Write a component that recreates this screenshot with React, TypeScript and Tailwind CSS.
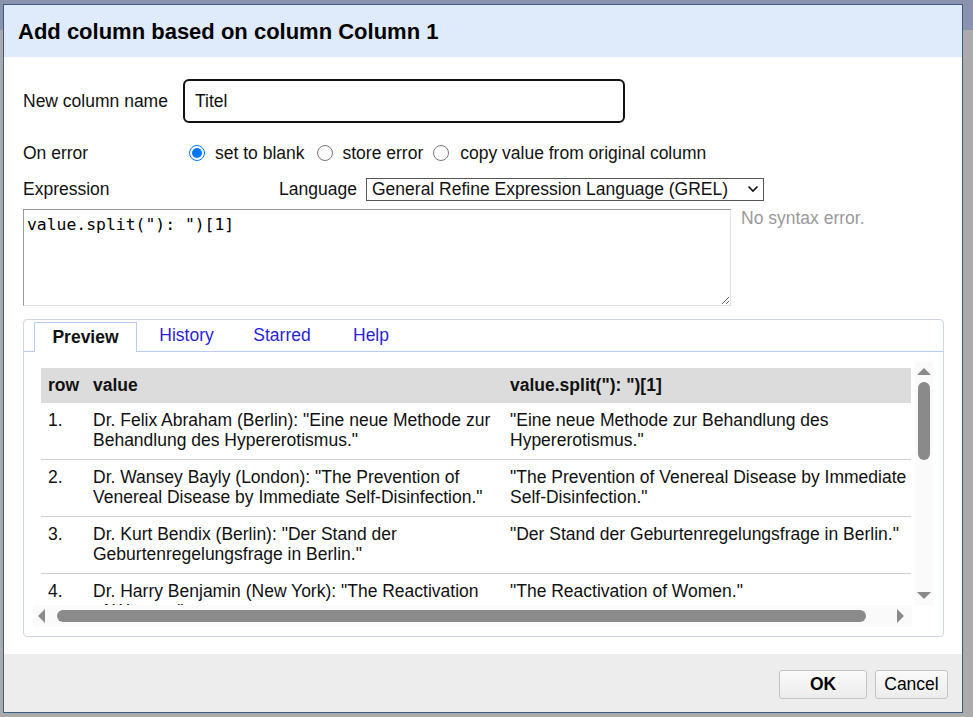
import React from "react";

const rows = [
  {
    n: "1.",
    value: 'Dr. Felix Abraham (Berlin): "Eine neue Methode zur Behandlung des Hypererotismus."',
    result: '"Eine neue Methode zur Behandlung des Hypererotismus."',
  },
  {
    n: "2.",
    value: 'Dr. Wansey Bayly (London): "The Prevention of Venereal Disease by Immediate Self-Disinfection."',
    result: '"The Prevention of Venereal Disease by Immediate Self-Disinfection."',
  },
  {
    n: "3.",
    value: 'Dr. Kurt Bendix (Berlin): "Der Stand der Geburtenregelungsfrage in Berlin."',
    result: '"Der Stand der Geburtenregelungsfrage in Berlin."',
  },
  {
    n: "4.",
    value: 'Dr. Harry Benjamin (New York): "The Reactivation of Women."',
    result: '"The Reactivation of Women."',
  },
];

function Radio({ checked }: { checked?: boolean }) {
  return (
    <span
      className={
        "inline-flex h-[16px] w-[16px] shrink-0 items-center justify-center rounded-full border " +
        (checked ? "border-[#0075ff] bg-white" : "border-[#767676] bg-white")
      }
    >
      {checked && <span className="h-[10px] w-[10px] rounded-full bg-[#0075ff]" />}
    </span>
  );
}

export default function App() {
  return (
    <div
      className="relative h-[717px] w-[973px] overflow-hidden bg-[#ababab] text-[17.5px] text-[#111]"
      style={{ fontFamily: '"Liberation Sans", Arial, sans-serif' }}
    >
      <div className="h-[30px] bg-[#8a92ae]" />
      <div className="absolute left-[3px] top-[4px] flex h-[709px] w-[960px] flex-col border border-[#3d5a80] bg-white">
        {/* header */}
        <div className="flex h-[52px] shrink-0 items-center bg-[#dfeafb] pl-[14px]">
          <h1 className="text-[22px] font-bold text-black">Add column based on column Column 1</h1>
        </div>

        {/* body */}
        <div className="flex flex-1 flex-col pl-[19px] pr-[19px] pt-[22px]">
          <div className="flex items-center">
            <span className="w-[160px]">New column name</span>
            <div className="flex h-[44px] w-[442px] items-center rounded-[6px] border-2 border-[#111] px-[10px]">
              Titel
            </div>
          </div>

          <div className="mt-[17px] flex items-center">
            <span className="w-[166px]">On error</span>
            <Radio checked />
            <span className="ml-[10px] mr-[12px]">set to blank</span>
            <Radio />
            <span className="ml-[10px] mr-[10px]">store error</span>
            <Radio />
            <span className="ml-[11px]">copy value from original column</span>
          </div>

          <div className="mt-[10px] flex items-center">
            <span className="w-[256px]">Expression</span>
            <span className="w-[87px]">Language</span>
            <div className="flex h-[23px] w-[398px] items-center justify-between border border-[#555] pl-[5px] pr-[4px]">
              <span>General Refine Expression Language (GREL)</span>
              <svg width="12" height="8" viewBox="0 0 12 8" fill="none" stroke="#111" strokeWidth="1.6">
                <path d="M1.5 1.5 L6 6 L10.5 1.5" />
              </svg>
            </div>
          </div>

          <div className="mt-[6px] flex items-start">
            <textarea
              readOnly
              value={'value.split("): ")[1]'}
              className="h-[97px] w-[708px] resize border border-b-[#e2e2e2] border-l-[#9a9a9a] border-r-[#e2e2e2] border-t-[#9a9a9a] px-[3px] pt-[5px] text-[16.4px] leading-[20px] text-black outline-none"
              style={{ fontFamily: '"DejaVu Sans Mono", "Liberation Mono", monospace' }}
            />
            <span className="ml-[10px] mt-[-4px] text-[#999]">No syntax error.</span>
          </div>

          {/* tabs panel */}
          <div className="mt-[13px] flex h-[318px] w-[921px] flex-col rounded-[4px] border border-[#cfd6e2] bg-white">
            <div className="flex h-[31px] items-end pl-[10px]">
              <div className="relative z-10 -mb-px flex h-[30px] w-[103px] items-center justify-center border border-b-0 border-[#b9cbf2] bg-white font-bold">
                Preview
              </div>
              <div className="flex h-[30px] w-[99px] items-center justify-center text-[#2a1fd6]">History</div>
              <div className="flex h-[30px] w-[92px] items-center justify-center text-[#2a1fd6]">Starred</div>
              <div className="flex h-[30px] w-[86px] items-center justify-center text-[#2a1fd6]">Help</div>
            </div>
            <div className="flex flex-1 flex-col border-t border-[#b9cbf2] pb-[8px] pl-[9px] pr-[10px] pt-[10px]">
              <div className="flex h-[243px]">
                <div className="flex-1 overflow-hidden pl-[8px] pt-[6px]">
                  <table className="w-[870px] table-fixed border-collapse text-left">
                    <colgroup>
                      <col className="w-[45px]" />
                      <col className="w-[417px]" />
                      <col />
                    </colgroup>
                    <thead>
                      <tr className="h-[35px] bg-[#dcdcdc] font-bold">
                        <th className="pl-[7px] font-bold">row</th>
                        <th className="pl-[7px] font-bold">value</th>
                        <th className="pl-[7px] font-bold">value.split("): ")[1]</th>
                      </tr>
                    </thead>
                    <tbody>
                      {rows.map((r) => (
                        <tr key={r.n} className="border-b border-[#cfcfcf] align-top leading-[20px]">
                          <td className="h-[57px] pl-[7px] pt-[7px]">{r.n}</td>
                          <td className="pl-[7px] pr-[6px] pt-[7px]">{r.value}</td>
                          <td className="pl-[7px] pt-[7px]">{r.result}</td>
                        </tr>
                      ))}
                    </tbody>
                  </table>
                </div>
                {/* vertical scrollbar */}
                <div className="flex w-[18px] flex-col items-center bg-[#fafafa] pt-[5px]">
                  <svg width="16" height="9" viewBox="0 0 16 9">
                    <path d="M8 1 L15 8 L1 8 Z" fill="#8a8a8a" />
                  </svg>
                  <div className="mt-[6px] h-[78px] w-[12px] rounded-full bg-[#8a8a8a]" />
                  <div className="flex-1" />
                  <svg width="16" height="9" viewBox="0 0 16 9" className="mb-[5px]">
                    <path d="M1 1 L15 1 L8 8 Z" fill="#8a8a8a" />
                  </svg>
                </div>
              </div>
              {/* horizontal scrollbar */}
              <div className="flex h-[22px] w-[879px] items-center bg-[#fafafa] pl-[4px] pr-[7px]">
                <svg width="9" height="16" viewBox="0 0 9 16">
                  <path d="M1 8 L8 1 L8 15 Z" fill="#8a8a8a" />
                </svg>
                <div className="ml-[11px] h-[12px] w-[809px] rounded-full bg-[#8a8a8a]" />
                <div className="flex-1" />
                <svg width="9" height="16" viewBox="0 0 9 16">
                  <path d="M1 1 L8 8 L1 15 Z" fill="#8a8a8a" />
                </svg>
              </div>
            </div>
          </div>
        </div>

        {/* footer */}
        <div className="flex h-[58px] shrink-0 items-center justify-end gap-[8px] bg-[#ededed] pr-[14px] pt-[2px]">
          <button className="h-[29px] w-[88px] rounded-[3px] border border-[#c4c4c4] bg-[linear-gradient(#fafafa,#ececec)] font-bold text-black">
            OK
          </button>
          <button className="h-[29px] w-[73px] rounded-[3px] border border-[#c4c4c4] bg-[linear-gradient(#fafafa,#ececec)] text-black">
            Cancel
          </button>
        </div>
      </div>
    </div>
  );
}
